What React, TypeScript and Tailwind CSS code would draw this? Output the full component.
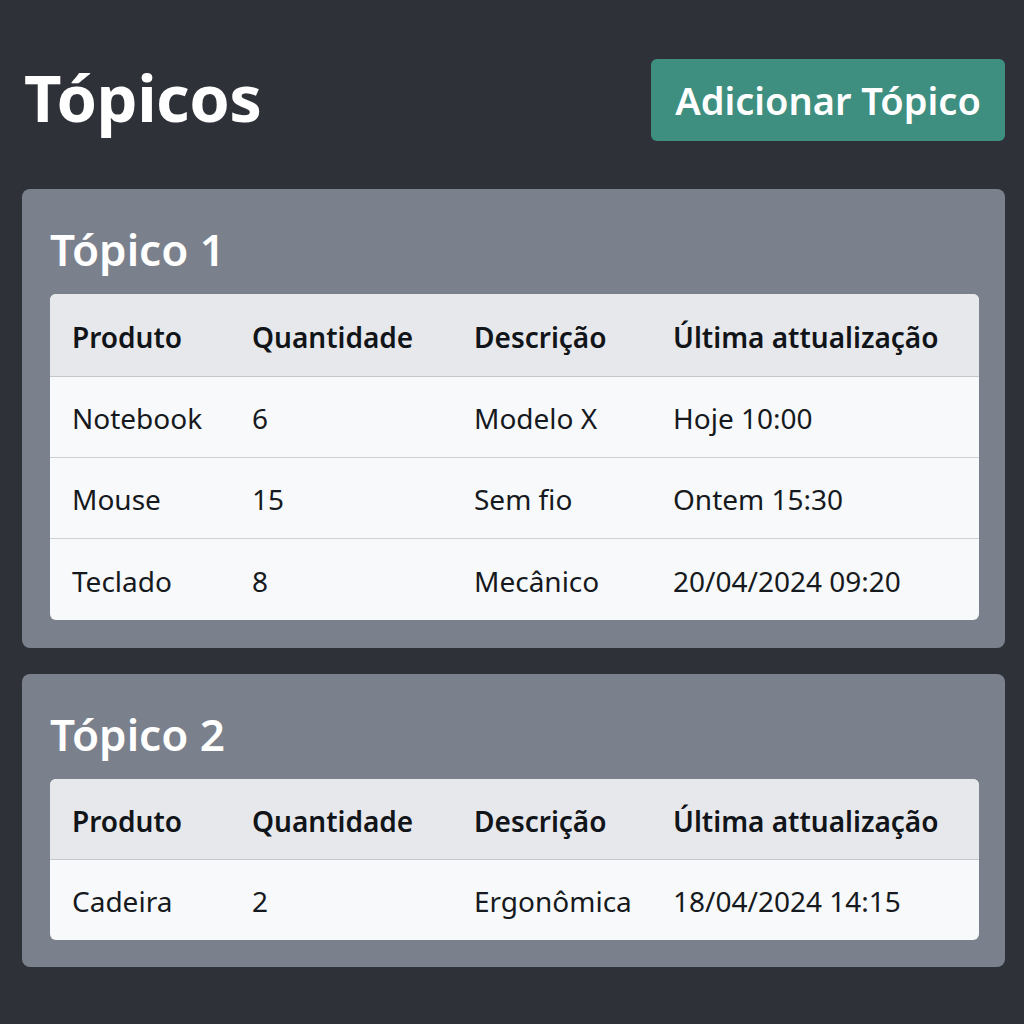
import React from "react";

type Row = [string, string, string, string];

const topics: { title: string; rows: Row[]; headH: string; rowH: string; pb: string }[] = [
  {
    title: "Tópico 1",
    rows: [
      ["Notebook", "6", "Modelo X", "Hoje 10:00"],
      ["Mouse", "15", "Sem fio", "Ontem 15:30"],
      ["Teclado", "8", "Mecânico", "20/04/2024 09:20"],
    ],
    headH: "h-[83px]",
    rowH: "h-[81px]",
    pb: "pb-[28px]",
  },
  {
    title: "Tópico 2",
    rows: [["Cadeira", "2", "Ergonômica", "18/04/2024 14:15"]],
    headH: "h-[81px]",
    rowH: "h-[80px]",
    pb: "pb-[27px]",
  },
];

const headers: Row = ["Produto", "Quantidade", "Descrição", "Última attualização"];
const cols = "grid grid-cols-[180px_222px_199px_1fr]";

function Table({ rows, headH, rowH }: { rows: Row[]; headH: string; rowH: string }) {
  return (
    <div className="rounded-[6px] overflow-hidden bg-[#f8f9fa]">
      <div className={`${cols} ${headH} items-center bg-[#e6e8eb] border-b border-[#c4c8cd] text-[28px] font-semibold text-[#111418]`}>
        {headers.map((h) => (
          <div key={h} className="pl-[22px] pt-[4px] whitespace-nowrap">{h}</div>
        ))}
      </div>
      {rows.map((r, i) => (
        <div
          key={i}
          className={`${cols} ${rowH} items-center text-[28px] text-[#16191d] ${i < rows.length - 1 ? "border-b border-[#cdd1d5]" : ""}`}
        >
          {r.map((c, j) => (
            <div key={j} className="pl-[22px] pt-[2px] whitespace-nowrap">{c}</div>
          ))}
        </div>
      ))}
    </div>
  );
}

export default function App() {
  return (
    <div
      className="w-[1024px] h-[1024px] bg-[#2e3137] pl-[22px] pr-[19px] pt-[59px]"
      style={{ fontFamily: '"Noto Sans", "Open Sans", sans-serif' }}
    >
      <div className="flex items-center justify-between">
        <h1 className="pl-[2px] mb-[6px] text-[65px] font-bold text-white leading-none tracking-[-0.5px]">Tópicos</h1>
        <button className="w-[354px] h-[82px] rounded-[6px] bg-[#3e8f80] text-white text-[38px] font-semibold">
          Adicionar Tópico
        </button>
      </div>
      <div className="mt-[48px] flex flex-col gap-[26px]">
        {topics.map((t) => (
          <div key={t.title} className={`bg-[#7b818c] rounded-[8px] pl-[28px] pr-[26px] pt-[38px] ${t.pb}`}>
            <h2 className="text-[44px] font-semibold text-white leading-none mb-[23px]">{t.title}</h2>
            <Table rows={t.rows} headH={t.headH} rowH={t.rowH} />
          </div>
        ))}
      </div>
    </div>
  );
}
